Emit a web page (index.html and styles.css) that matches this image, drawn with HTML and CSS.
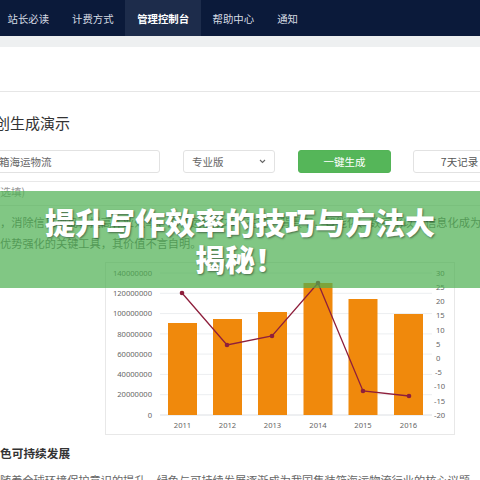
FILE: index.html
```html
<!DOCTYPE html>
<html lang="zh-CN">
<head>
<meta charset="utf-8">
<title>创生成演示</title>
<link rel="stylesheet" href="styles.css">
</head>
<body>
<nav class="topnav">
  <a class="nav-item">站长必读</a>
  <a class="nav-item">计费方式</a>
  <a class="nav-item active">管理控制台</a>
  <a class="nav-item">帮助中心</a>
  <a class="nav-item">通知</a>
</nav>
<div class="subbar"></div>
<div class="page-head"></div>
<main class="content">
  <h1 class="title">创生成演示</h1>
  <div class="form-row">
    <div class="field input">箱海运物流</div>
    <div class="field select">专业版
      <svg class="chev" width="7" height="5" viewBox="0 0 7 5"><path d="M1 1l2.5 2.5L6 1" fill="none" stroke="#666" stroke-width="1.1"/></svg>
    </div>
    <button class="btn btn-primary">一键生成</button>
    <button class="btn btn-default">7天记录</button>
  </div>
  <div class="optional">(选填)</div>
  <div class="textarea">
    <p class="para nowrap">，消除信息孤岛，提高作业效率，降低运营成本。在这一背景下，智能化、数字化以及信息化成为企业</p>
    <p class="para">优势强化的关键工具，其价值不言自明。</p>
  </div>
  <div class="chart">
    <svg width="348" height="171" viewBox="0 0 348 171" font-family="Noto Sans, Liberation Sans, sans-serif" font-size="7.6" fill="#666">
      <g stroke="#eceef0" stroke-width="1">
        <line x1="54" y1="10" x2="326" y2="10"/>
        <line x1="54" y1="30.3" x2="326" y2="30.3"/>
        <line x1="54" y1="50.6" x2="326" y2="50.6"/>
        <line x1="54" y1="70.9" x2="326" y2="70.9"/>
        <line x1="54" y1="91.1" x2="326" y2="91.1"/>
        <line x1="54" y1="111.4" x2="326" y2="111.4"/>
        <line x1="54" y1="131.7" x2="326" y2="131.7"/>
        <line x1="54" y1="152" x2="326" y2="152" stroke="#dcdfe3"/>
      </g>
      <g text-anchor="end">
        <text x="46" y="12.7">140000000</text>
        <text x="46" y="33">120000000</text>
        <text x="46" y="53.3">100000000</text>
        <text x="46" y="73.6">80000000</text>
        <text x="46" y="93.8">60000000</text>
        <text x="46" y="114.1">40000000</text>
        <text x="46" y="134.4">20000000</text>
        <text x="46" y="154.7">0</text>
      </g>
      <g>
        <text x="330" y="12.7">30</text>
        <text x="330" y="26.9">25</text>
        <text x="330" y="41.1">20</text>
        <text x="330" y="55.3">15</text>
        <text x="330" y="69.5">10</text>
        <text x="330" y="83.7">5</text>
        <text x="330" y="97.9">0</text>
        <text x="329" y="112.1">-5</text>
        <text x="328" y="126.3">-10</text>
        <text x="328" y="140.5">-15</text>
        <text x="328" y="154.7">-20</text>
      </g>
      <g fill="#f0890c">
        <rect x="62" y="60" width="29" height="92"/>
        <rect x="107" y="56" width="29" height="96"/>
        <rect x="152" y="49" width="29" height="103"/>
        <rect x="197.5" y="20" width="29" height="132"/>
        <rect x="242.5" y="36" width="29" height="116"/>
        <rect x="288" y="51" width="29" height="101"/>
      </g>
      <polyline points="76,30 121,82 166,73 212,20 257,128 303,133" fill="none" stroke="#8e1f3c" stroke-width="1.3"/>
      <g fill="#8e1f3c">
        <circle cx="76" cy="30" r="2.3"/>
        <circle cx="121" cy="82" r="2.3"/>
        <circle cx="166" cy="73" r="2.3"/>
        <circle cx="212" cy="20" r="2.3"/>
        <circle cx="257" cy="128" r="2.3"/>
        <circle cx="303" cy="133" r="2.3"/>
      </g>
      <g text-anchor="middle">
        <text x="76.5" y="165">2011</text>
        <text x="121.5" y="165">2012</text>
        <text x="166.5" y="165">2013</text>
        <text x="212" y="165">2014</text>
        <text x="257" y="165">2015</text>
        <text x="302.5" y="165">2016</text>
      </g>
    </svg>
  </div>
  <h2 class="section">色可持续发展</h2>
  <p class="para nowrap">随着全球环境保护意识的提升，绿色与可持续发展逐渐成为我国集装箱海运物流行业的核心议题</p>
</main>
<div class="banner">提升写作效率的技巧与方法大揭秘！</div>
</body>
</html>
```
FILE: styles.css
```css
* { box-sizing: border-box; }
html, body { margin: 0; padding: 0; }
body {
  width: 480px;
  height: 480px;
  overflow: hidden;
  position: relative;
  background: #fff;
  font-family: "Noto Sans CJK SC", "Noto Sans", sans-serif;
  color: #333;
}
.topnav {
  height: 36px;
  background: #0b1a3a;
  display: flex;
  align-items: stretch;
  margin-left: -4px;
}
.nav-item {
  display: flex;
  align-items: center;
  padding: 0 11.5px;
  font-size: 10.4px;
  color: #d5dae3;
  white-space: nowrap;
}
.nav-item.active {
  background: #1d2c4b;
  color: #fff;
  font-weight: 700;
  padding: 0 12px;
}
.subbar { height: 11px; background: #eef0f1; }
.page-head { height: 45px; border-bottom: 1px solid #e6e6e6; }
.content { overflow: hidden; }
.title {
  margin: 21px 0 0 -5px;
  font-size: 15px;
  line-height: 20px;
  font-weight: 400;
  color: #333;
}
.form-row {
  margin-top: 17px;
  display: flex;
  align-items: center;
  padding-bottom: 8px;
  border-bottom: 1px solid #e8e8e8;
  white-space: nowrap;
}
.field, .btn {
  flex: none;
  height: 23px;
  border-radius: 3px;
  font-family: inherit;
  font-size: 10.5px;
  display: flex;
  align-items: center;
}
.input {
  margin-left: -14px;
  width: 174px;
  padding: 0 12px;
  border: 1px solid #e2e2e2;
  color: #666;
}
.select {
  margin-left: 23px;
  width: 92px;
  padding: 0 8px;
  border: 1px solid #e2e2e2;
  color: #666;
  justify-content: space-between;
}
.chev { display: block; }
.btn { justify-content: center; padding: 0; }
.btn-primary {
  margin-left: 23px;
  width: 93px;
  border: 1px solid #53b457;
  background: #55b659;
  color: #fff;
}
.btn-default {
  margin-left: 22px;
  width: 93px;
  border: 1px solid #e2e2e2;
  background: #fff;
  color: #555;
}
.optional {
  margin-left: -3px;
  font-size: 10.5px;
  line-height: 19px;
  color: #999;
}
.textarea {
  margin-top: 4px;
  border-top: 1px solid #e8e8e8;
  padding-top: 6px;
  padding-bottom: 8px;
}
.para {
  margin: 0;
  font-size: 11.2px;
  line-height: 21px;
  color: #666;
}
.nowrap { white-space: nowrap; }
.chart {
  margin-left: 105px;
  width: 350px;
  height: 173px;
  border: 1px solid #e8e8e8;
  background: #fff;
}
.chart svg { display: block; }
.section {
  margin: 9px 0 0 0;
  font-size: 11.7px;
  line-height: 18px;
  font-weight: 700;
  color: #333;
}
.section + .para { margin-top: 8px; }
.banner {
  position: absolute;
  left: 0;
  top: 191px;
  width: 480px;
  height: 97px;
  padding: 0 40px;
  background: rgba(76, 175, 80, 0.7);
  display: flex;
  align-items: center;
  justify-content: center;
  text-align: center;
  font-size: 30px;
  line-height: 37px;
  font-weight: 900;
  color: #fff;
  text-shadow: 1px 1px 2px rgba(0, 0, 0, 0.45);
}
```
